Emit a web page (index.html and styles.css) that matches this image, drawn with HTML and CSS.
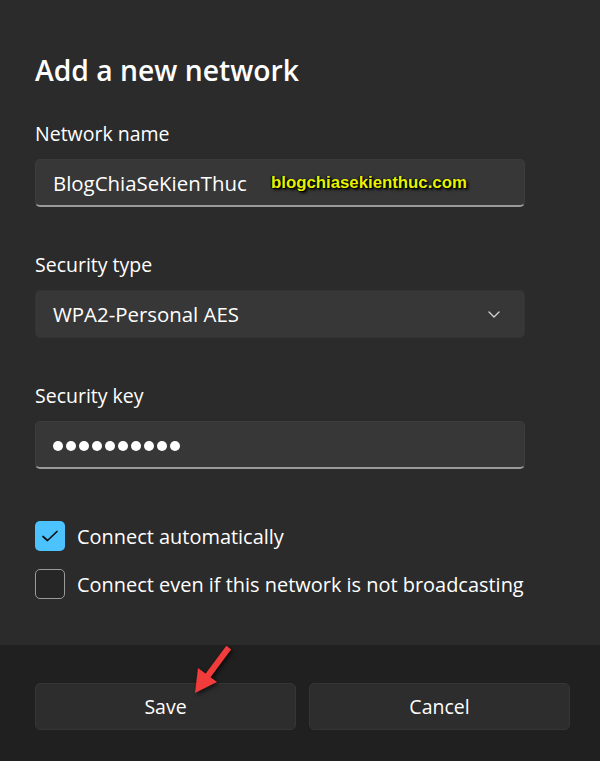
FILE: index.html
```html
<!DOCTYPE html>
<html lang="en">
<head>
    <meta charset="UTF-8">
    <meta name="viewport" content="width=device-width, initial-scale=1.0">
    <title>Add a new network</title>
    <link rel="stylesheet" href="styles.css">
</head>
<body>
    <div class="dialog">
        <main class="content">
            <h1 class="title">Add a new network</h1>

            <div class="field">
                <label class="field-label">Network name</label>
                <div class="textbox">
                    <span class="value">BlogChiaSeKienThuc</span>
                    <span class="watermark">blogchiasekienthuc.com</span>
                </div>
            </div>

            <div class="field">
                <label class="field-label">Security type</label>
                <div class="combo">
                    <span class="value">WPA2-Personal AES</span>
                    <svg class="chevron" width="12" height="7" viewBox="0 0 12 7">
                        <path d="M1 1 L6 6 L11 1" fill="none" stroke="#d0d0d0" stroke-width="1.4" stroke-linecap="round" stroke-linejoin="round"/>
                    </svg>
                </div>
            </div>

            <div class="field">
                <label class="field-label">Security key</label>
                <div class="textbox">
                    <span class="dots">
                        <i></i><i></i><i></i><i></i><i></i><i></i><i></i><i></i><i></i><i></i>
                    </span>
                </div>
            </div>

            <div class="checks">
                <label class="check">
                    <span class="box checked">
                        <svg width="18" height="14" viewBox="0 0 18 14">
                            <path d="M2 7.5 L6.5 11.5 L16 2.5" fill="none" stroke="#111" stroke-width="1.7" stroke-linecap="round" stroke-linejoin="round"/>
                        </svg>
                    </span>
                    Connect automatically
                </label>
                <label class="check">
                    <span class="box"></span>
                    Connect even if this network is not broadcasting
                </label>
            </div>
        </main>

        <footer class="actions">
            <button class="btn">Save</button>
            <button class="btn">Cancel</button>
        </footer>

        <!-- red pointer drawn over the Save button -->
        <svg class="arrow" width="50" height="60" viewBox="0 0 50 60">
            <line x1="42" y1="10" x2="22" y2="37" stroke="#f23b3b" stroke-width="6" stroke-linecap="square"/>
            <polygon points="13,28 32,42 10,53" fill="#f23b3b"/>
        </svg>
    </div>
</body>
</html>
```

FILE: styles.css
```css
body {
    margin: 0;
    padding: 0;
    background-color: #2b2b2b;
    color: #ffffff;
    font-family: "Open Sans", "Noto Sans", sans-serif;
}
.dialog {
    position: relative;
    display: flex;
    flex-direction: column;
    height: 761px;
    overflow: hidden;
}
.content {
    flex: 1;
    padding: 52px 75px 0 35px;
}
.title {
    margin: 0 0 33px 0;
    font-size: 28.3px;
    line-height: 36px;
    font-weight: 600;
}
.field {
    display: flex;
    flex-direction: column;
    gap: 12px;
    margin-bottom: 45px;
}
.field-label {
    font-size: 19.5px;
    line-height: 26px;
}
.textbox, .combo {
    position: relative;
    display: flex;
    align-items: center;
    box-sizing: border-box;
    height: 48px;
    padding: 0 24px 0 17px;
    border-radius: 5px;
    background-color: #373737;
    border: 1px solid #3c3c3c;
    font-size: 20.4px;
}
.textbox {
    border-bottom: 2px solid #9a9a9a;
}
.combo {
    justify-content: space-between;
    border-color: #333333;
}
.watermark {
    position: absolute;
    left: 235px;
    top: 13px;
    font-family: "Liberation Sans", Arial, sans-serif;
    font-weight: bold;
    font-size: 16.8px;
    color: #e8f200;
    text-shadow: 1px 1px 1px #000, 2px 2px 3px #000, -1px 0 1px #000;
}
.dots {
    display: flex;
    gap: 3px;
    margin-top: 2px;
}
.dots i {
    width: 10px;
    height: 10px;
    border-radius: 50%;
    background-color: #ffffff;
}
.checks {
    display: flex;
    flex-direction: column;
    gap: 18px;
    margin-top: 52px;
}
.check {
    display: flex;
    align-items: center;
    gap: 12px;
    height: 30px;
    font-size: 19.95px;
}
.box {
    display: flex;
    align-items: center;
    justify-content: center;
    box-sizing: border-box;
    width: 30px;
    height: 30px;
    border-radius: 5px;
    border: 1.5px solid #9a9a9a;
    background-color: #262626;
}
.box.checked {
    border: none;
    background-color: #4cc2ff;
}
.actions {
    display: flex;
    gap: 13px;
    height: 116px;
    box-sizing: border-box;
    padding: 38px 30px 0 35px;
    background-color: #202020;
}
.btn {
    flex: 1;
    height: 47px;
    border-radius: 5px;
    border: 1px solid #353535;
    background-color: #2d2d2d;
    color: #ffffff;
    font-family: inherit;
    font-size: 19.5px;
}
.arrow {
    position: absolute;
    left: 185px;
    top: 640px;
    filter: drop-shadow(2px 2px 2px rgba(0, 0, 0, 0.6));
}
```
